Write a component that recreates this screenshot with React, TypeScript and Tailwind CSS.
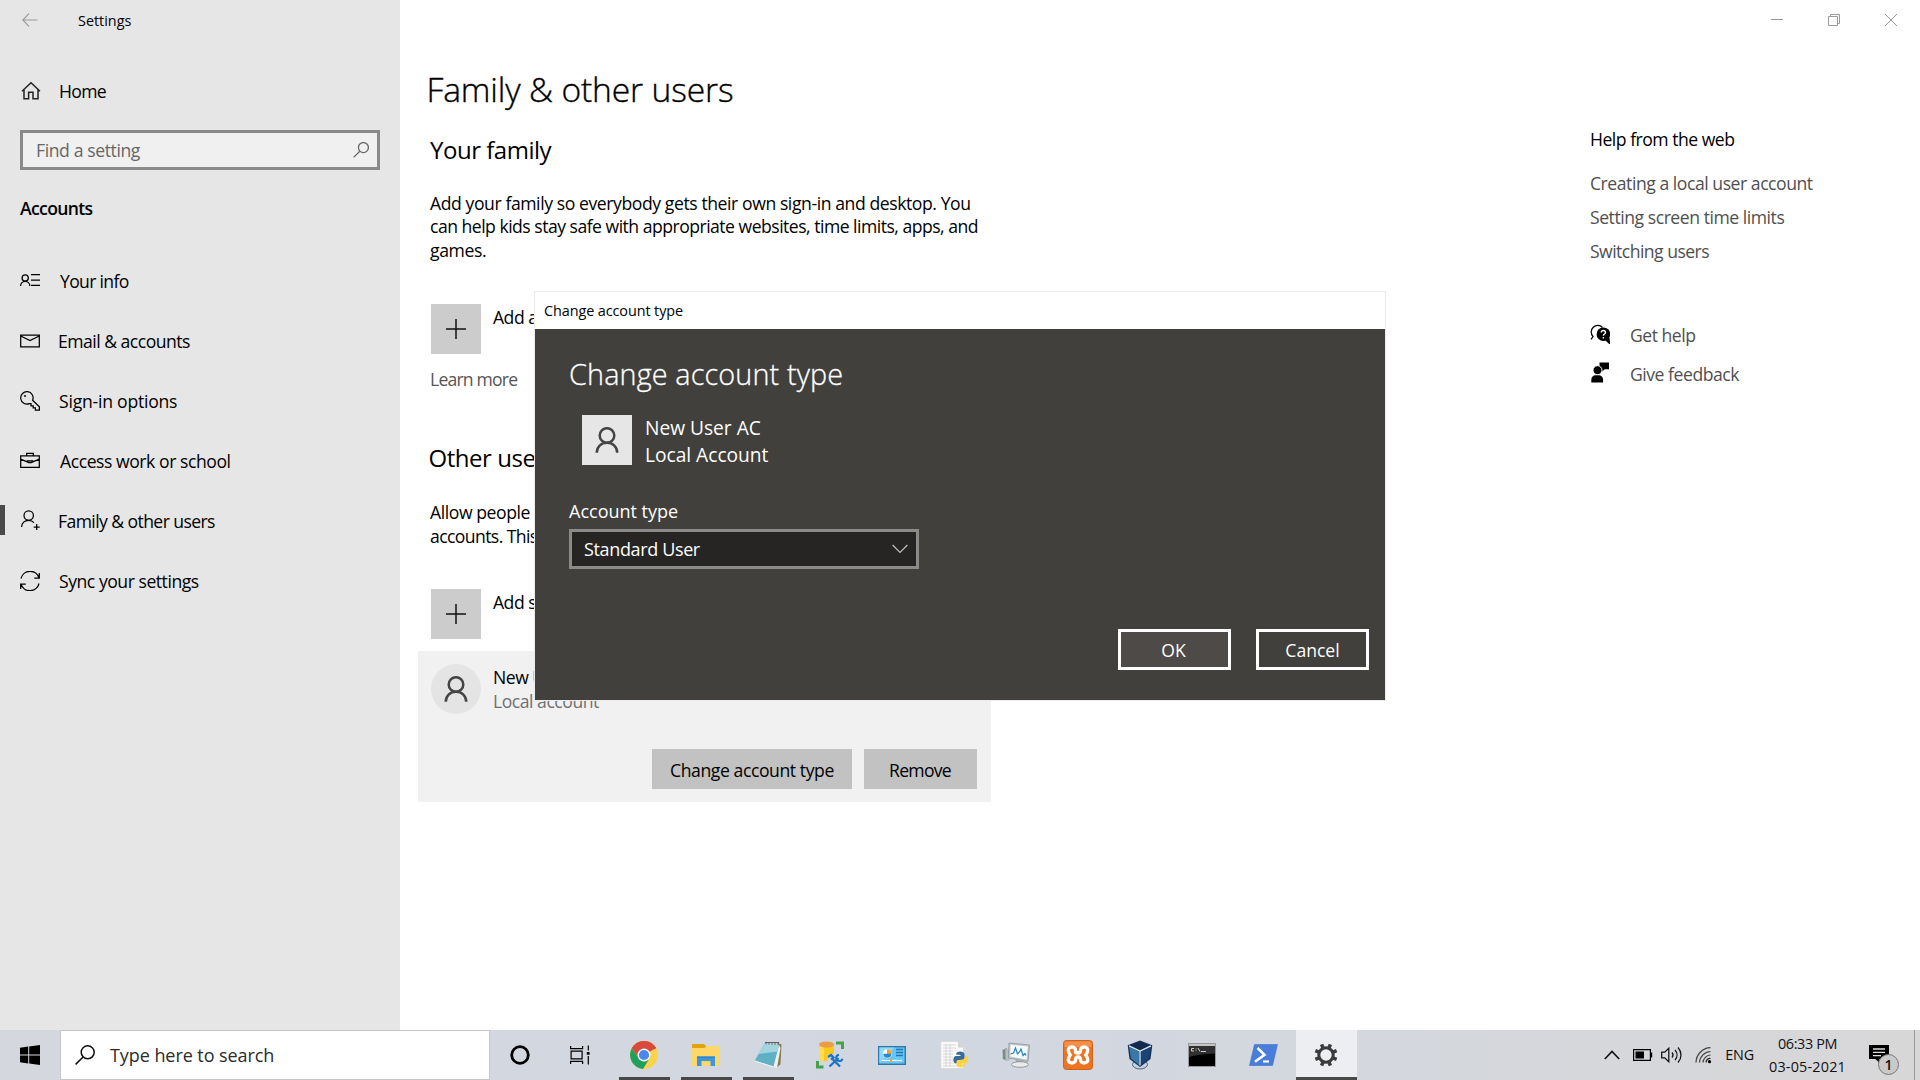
import React from "react";
import type { ReactNode } from "react";

const BODY = "text-[17.6px] leading-[24px]";

function Icon({ w = 20, h = 20, children, className = "" }: { w?: number; h?: number; children: ReactNode; className?: string }) {
  return (
    <svg width={w} height={h} viewBox={`0 0 ${w} ${h}`} fill="none" stroke="currentColor" strokeWidth={1.25} className={`shrink-0 ${className}`}>
      {children}
    </svg>
  );
}

const navItems: { label: string; text: string; icon: ReactNode; active?: boolean }[] = [
  {
    label: "Your info",
    text: "tracking-[-0.68px] ml-[20px]",
    icon: (
      <Icon className="-mt-[2px]">
        <circle cx="5.2" cy="8" r="3.1" />
        <path d="M.6 16c0-2.700 2-4.700 4.600-4.700S9.800 13.300 9.800 16M11 4.600h9M11 10h9M11 15.400h9" />
      </Icon>
    ),
  },
  {
    label: "Email & accounts",
    text: "tracking-[-0.51px] ml-[18px]",
    icon: (
      <Icon>
        <path d="M.7 4.200h18.600v11.600H.7zM.7 5l9.300 4.600L19.300 5" />
      </Icon>
    ),
  },
  {
    label: "Sign-in options",
    text: "tracking-[-0.23px] ml-[19px]",
    icon: (
      <Icon>
        <path d="M12.600 9.300a6.200 6.200 0 1 0-3.300 3.300l1.700 0v2.200h2.200v2h2.200v2.400h4v-3.300z" />
        <circle cx="5" cy="5" r=".8" fill="currentColor" strokeWidth=".5" />
      </Icon>
    ),
  },
  {
    label: "Access work or school",
    text: "tracking-[-0.45px] ml-[20px]",
    icon: (
      <Icon className="-mt-[1px]">
        <path d="M.7 4.800h18.600v11.600H.7zM6.700 4.600V2.400h6.600v2.200M.7 8.200l6.500 2.600M19.300 8.200l-6.500 2.600" />
        <path d="M7.200 9.900h5.600c0 2.300-5.600 2.300-5.600 0z" />
      </Icon>
    ),
  },
  {
    label: "Family & other users",
    text: "tracking-[-0.59px] ml-[18px]",
    active: true,
    icon: (
      <Icon className="-mt-[2px]">
        <circle cx="8.700" cy="5.600" r="4.700" />
        <path d="M1.600 17c0-4 3-6.700 7-6.700 2.200 0 4.100.9 5.400 2.400M16.700 14v6M13.700 17h6" />
      </Icon>
    ),
  },
  {
    label: "Sync your settings",
    text: "tracking-[-0.47px] ml-[19px]",
    icon: (
      <Icon>
        <path d="M1 7.500A9.300 9.300 0 0 1 19 7M19.300 2v5h-5M19 12.500A9.300 9.300 0 0 1 1 13M.7 18v-5h5" />
      </Icon>
    ),
  },
];

function Sidebar() {
  return (
    <aside className="flex w-[400px] shrink-0 flex-col bg-[#e6e6e6]">
      <div className="flex h-10 items-center pl-[22px]">
        <Icon w={16} h={14} className="text-[#999]">
          <path d="M15.500 7H.8M7 .7.8 7 7 13.300" strokeWidth="1.100" />
        </Icon>
        <span className="ml-[40px] mt-[2px] text-[14.4px] leading-5">Settings</span>
      </div>
      <div className="mt-[21px] flex h-[60px] items-center pl-[21px]">
        <Icon className="text-[#222]">
          <path d="M1 10.200 10 1.700l9 8.500M3 8.500v9.300h4.600v-6.500h4.400v6.500h5V8.500" strokeWidth="1.500" />
        </Icon>
        <span className={`${BODY} ml-[18px] tracking-[-0.7px]`}>Home</span>
      </div>
      <div className="mx-5 mt-[9px] flex h-10 items-center justify-between border-[3px] border-[#8a8a8a] bg-[#f0f0f0] pl-[13px] pr-[8px]">
        <span className={`${BODY} tracking-[-0.4px] text-[#666]`}>Find a setting</span>
        <Icon w={16} h={16} className="text-[#666]">
          <circle cx="10.400" cy="5.600" r="5" />
          <path d="M6.800 9.200.6 15.400" />
        </Icon>
      </div>
      <h2 className={`${BODY} ml-[20px] mt-[26px] font-semibold tracking-[-0.65px]`}>Accounts</h2>
      <nav className="mt-[31px] flex flex-col">
        {navItems.map((n) => (
          <div key={n.label} className="flex h-[60px] items-center">
            <span className={`-mt-[2px] h-[30px] w-[5px] ${n.active ? "bg-[#4c4a48]" : ""}`} />
            <span className="ml-[15px] flex items-center">
              {n.icon}
              <span className={`${BODY} whitespace-nowrap ${n.text}`}>{n.label}</span>
            </span>
          </div>
        ))}
      </nav>
    </aside>
  );
}

function PlusTile() {
  return (
    <span className="flex size-[50px] shrink-0 items-center justify-center bg-[#ccc] text-[#111]">
      <Icon>
        <path d="M10 0v20M0 10h20" strokeWidth="1.500" />
      </Icon>
    </span>
  );
}

function Person() {
  return (
    <Icon w={24} h={26} className="text-[#444]">
      <circle cx="12" cy="8.500" r="7.300" strokeWidth="2.500" />
      <path d="M1.800 25.800c0-6 4.200-10 10.200-10s10.200 4 10.200 10" strokeWidth="2.500" />
    </Icon>
  );
}

function Content() {
  return (
    <div className="flex w-[591px] flex-col pl-[30px] pt-[67px]">
      <h1 className="-ml-[3.500px] whitespace-nowrap text-[33.6px] font-light leading-[44px] tracking-[-0.15px] [-webkit-text-stroke:0.35px_black]">Family &amp; other users</h1>
      <h2 className="mt-[23px] text-[24px] leading-8 tracking-[-0.48px]">Your family</h2>
      <p className="mt-[25.5px] whitespace-nowrap text-[17.6px] leading-[23.5px]">
        <span className="block tracking-[-0.42px]">Add your family so everybody gets their own sign-in and desktop. You</span>
        <span className="block tracking-[-0.51px]">can help kids stay safe with appropriate websites, time limits, apps, and</span>
        <span className="block tracking-[-0.4px]">games.</span>
      </p>
      <div className="ml-[1px] mt-[42px] flex">
        <PlusTile />
        <span className={`${BODY} ml-[12px] mt-[1px] tracking-[-0.5px]`}>Add a</span>
      </div>
      <span className={`${BODY} mt-[13px] tracking-[-0.8px] text-[#555]`}>Learn more</span>
      <h2 className="-ml-[1.500px] mt-[51px] text-[24px] leading-8 tracking-[-0.45px]">Other use</h2>
      <p className="mt-[25.5px] whitespace-nowrap text-[17.6px] leading-[24px] tracking-[-0.42px]">
        <span className="block">Allow people</span>
        <span className="block tracking-[-0.6px]">accounts. This</span>
      </p>
      <div className="ml-[1px] mt-[41.5px] flex">
        <PlusTile />
        <span className={`${BODY} ml-[12px] mt-[1px] tracking-[-0.5px]`}>Add s</span>
      </div>
      <div className="-ml-3 mt-3 flex h-[151px] flex-col justify-between bg-[#f1f1f1] pb-[13px] pl-[13px] pr-[14px] pt-[13px]">
        <div className="flex">
          <span className="flex size-[50px] items-center justify-center rounded-full bg-[#e4e4e4]">
            <Person />
          </span>
          <span className="ml-[12px] mt-[1px] flex flex-col">
            <span className={`${BODY} tracking-[-0.5px]`}>New U</span>
            <span className={`${BODY} tracking-[-0.48px] text-[#707070]`}>Local account</span>
          </span>
        </div>
        <div className="flex justify-end gap-3">
          <button className={`${BODY} h-10 w-[200px] bg-[#c2c2c2] pt-[2px] tracking-[-0.42px]`}>Change account type</button>
          <button className={`${BODY} h-10 w-[113px] bg-[#c2c2c2] pr-[1px] pt-[2px] tracking-[-0.72px]`}>Remove</button>
        </div>
      </div>
    </div>
  );
}

function HelpColumn() {
  return (
    <div className={`${BODY} ml-[599px] flex w-[330px] flex-col`}>
      <div className="flex h-10 items-center justify-end pr-[23px] text-[#999]">
        <Icon w={12} h={12}><path d="M0 5.500h12" strokeWidth="1" /></Icon>
        <Icon w={12} h={12} className="ml-[45px]"><path d="M.5 2.500h9v9h-9zM2.500 2.500v-2h9v9h-2" strokeWidth="1" /></Icon>
        <Icon w={12} h={12} className="ml-[45px]"><path d="m0 0 12 12M12 0 0 12" strokeWidth="1" /></Icon>
      </div>
      <span className="mt-[87px] tracking-[-0.5px]">Help from the web</span>
      <div className="mt-[20px] flex flex-col gap-[10px] text-[#4f4f4f]">
        <span className="tracking-[-0.46px]">Creating a local user account</span>
        <span className="tracking-[-0.46px]">Setting screen time limits</span>
        <span className="tracking-[-0.54px]">Switching users</span>
      </div>
      <div className="mt-[60px] flex items-center">
        <Icon className="-mt-[3px] text-black">
          <path d="M1 15.400 3 12.500A6.300 6.300 0 1 1 12.500 3.500" />
          <circle cx="13.400" cy="10.200" r="6.200" fill="black" />
          <path d="m15 15 4.500 4.500-.5-5z" fill="black" />
          <path d="M11.300 8.600c0-2.800 4.200-2.600 4.200-.2 0 1.600-2.100 1.500-2.100 3.300M13.400 13v1.400" stroke="white" strokeWidth="1.400" />
        </Icon>
        <span className="ml-[20px] tracking-[-0.49px] text-[#4f4f4f]">Get help</span>
      </div>
      <div className="mt-[15px] flex items-center">
        <Icon className="-mt-[3px] text-black" h={21}>
          <path d="M9.500.5H19v6.700h-4.200l-3 2.600V7.200H9.500z" fill="black" stroke="none" />
          <circle cx="7.500" cy="8.200" r="4.500" fill="black" stroke="white" strokeWidth="1" />
          <path d="M1.300 20.500v-2.600c0-2.400 1.500-4.600 3.600-4.600h4.500c2.100 0 3.700 2.200 3.700 4.600v2.600z" fill="black" stroke="none" />
        </Icon>
        <span className="ml-[20px] tracking-[-0.47px] text-[#4f4f4f]">Give feedback</span>
      </div>
    </div>
  );
}

function Dialog() {
  return (
    <div className="absolute left-[534px] top-[291px] flex h-[410px] w-[852px] flex-col border border-[#ebebeb] bg-[#41403c] text-white">
      <div className="flex h-[37px] items-center bg-white pl-[9px] text-[14.4px] leading-5 tracking-[-0.08px] text-black">Change account type</div>
      <h2 className="ml-[34px] mt-[25px] text-[28.8px] font-light leading-10 tracking-[0.13px] [-webkit-text-stroke:0.3px_white]">Change account type</h2>
      <div className="ml-[47px] mt-[21px] flex">
        <span className="flex size-[50px] items-center justify-center bg-[#e6e6e6]">
          <Person />
        </span>
        <div className="ml-[13px] flex flex-col text-[19.2px] leading-[26.5px] tracking-[-0.02px]">
          <span>New User AC</span>
          <span>Local Account</span>
        </div>
      </div>
      <span className="ml-[34px] mt-[31px] text-[18px] leading-6">Account type</span>
      <div className="ml-[34px] mt-[6px] flex h-10 w-[350px] items-center justify-between border-[3px] border-[#8b8a88] bg-[#262523] pl-[12px] pr-[8px]">
        <span className="-mt-[1px] text-[18px] leading-[22px] tracking-[-0.36px]">Standard User</span>
        <Icon w={16} h={10} className="text-[#bbb]">
          <path d="m.6 1 7.400 7.400L15.400 1" />
        </Icon>
      </div>
      <div className="mr-4 mt-[60px] flex justify-end gap-[25px] text-[17.600px] leading-6">
        <button className="h-[41px] w-[113px] border-[3px] border-white bg-[#4e4a47] pr-[2px]">OK</button>
        <button className="h-[41px] w-[113px] border-[3px] border-white">Cancel</button>
      </div>
    </div>
  );
}

const ChromeIcon = (
  <svg width="28" height="28" viewBox="0 0 28 28">
    <circle cx="14" cy="14" r="14" fill="#fdd34d" />
    <path d="M14 14 1.880 7A14 14 0 0 1 26.120 7z" fill="#da4a3c" />
    <path d="M14 7.600h12.450A14 14 0 0 0 1.880 7l6.580 10.200z" fill="#da4a3c" />
    <path d="M1.880 7A14 14 0 0 0 13 27.950L19.540 17.200 14 20.400 8.460 17.200z" fill="#1fa15d" />
    <circle cx="14" cy="14" r="6.500" fill="#fff" />
    <circle cx="14" cy="14" r="5.100" fill="#4a88f0" />
  </svg>
);

const ExplorerIcon = (
  <svg width="28" height="24" viewBox="0 0 28 24">
    <path d="M0 1h12l2 2v4H0z" fill="#e3a10c" />
    <path d="M0 5h12.500l2-2H28v20H0z" fill="#ffd768" />
    <path d="M5 23V13.500h18V23h-4.500v-5h-9v5z" fill="#3e97dd" />
    <path d="M5 13.500h18v1.500H5z" fill="#2f86cf" />
  </svg>
);

const NotepadIcon = (
  <svg width="28" height="28" viewBox="0 0 28 28">
    <path d="m24 2 3.500 1.500-1 20-4 3z" fill="#8a7a55" />
    <path d="m24.500 3-6 22.500 4.500 1.500 3.500-20z" fill="#eef1f2" />
    <path d="M10.500 2.500 25 4l-5.500 21.500L.8 19.500z" fill="#5fb0c4" />
    <path d="M10.500 2.500 25 4l-1.800 6.500L4.500 13z" fill="#a3d5df" />
    <path d="M.8 19.500 19.500 25.500l-.4 1L.5 20.500z" fill="#e8f3f5" />
    <path d="M11 1.500h14M12 .8v2.500M15 1v2.500M18 1v2.500M21 1.200v2.500M24 1.400v2.500" stroke="#555" strokeWidth=".9" />
  </svg>
);

const DatabaseIcon = (
  <svg width="28" height="28" viewBox="0 0 28 28">
    <path d="M3 3.500v14c0 3.500 15 3.500 15 0v-14z" fill="#fcc91e" />
    <path d="M3 3.500v14c0 1.300 2 2.100 5 2.500V4z" fill="#ffdc54" />
    <ellipse cx="10.500" cy="3.600" rx="7.500" ry="3.200" fill="#eb9d45" />
    <path d="M20 2h6.500v6M1.500 20v6h6" fill="none" stroke="#46a148" strokeWidth="3" />
    <path d="M11.500 13.500h9v5l-7 7h-2z" fill="#d2d7e0" />
    <path d="m13.500 25.500 9-8.500M12 16l3-2 2.500 2.500-2.500 2M16 17.500l8 8" fill="none" stroke="#1a73c8" strokeWidth="2.300" />
    <path d="M23 13.700a3.200 3.200 0 1 0 3.500 4" fill="none" stroke="#1a73c8" strokeWidth="2" />
  </svg>
);

const ControlPanelIcon = (
  <svg width="28" height="19" viewBox="0 0 28 19">
    <rect x=".7" y=".7" width="26.600" height="17.600" fill="#68c5f5" stroke="#2b78a8" strokeWidth="1.400" />
    <path d="M1.400 17.600V1.400h15z" fill="#90d8fb" />
    <circle cx="9.300" cy="7.800" r="4.600" fill="#fff" />
    <path d="M9.300 7.800h-4a4 4 0 1 0 4-4z" fill="#2987cf" />
    <path d="M9.300 7.800V3.200a4.600 4.600 0 0 1 4.600 4.600z" fill="#f7a325" />
    <path d="M18 3.500h7M18 6.500h7M18 9.500h7" stroke="#1e75b8" strokeWidth="1.700" />
    <path d="M4 14.500h20" stroke="#fff" strokeWidth="1.200" />
    <path d="M13 13v3" stroke="#f7a325" strokeWidth="2" />
  </svg>
);

const PythonFileIcon = (
  <svg width="28" height="28" viewBox="0 0 28 28">
    <path d="M.8.5H18l5.500 6v21H.8z" fill="#fafafa" stroke="#d4d4d4" strokeWidth=".7" />
    <path d="M3 4h13M3 7h13M3 10h10M3 13h10M3 16h10M3 19h11M3 22h11M3 25h15M6 3v23M10 3v23" stroke="#cfcfcf" strokeWidth=".8" />
    <path d="M18 .5v6h5.500z" fill="#d2d2d2" />
    <path d="M16 13.500c0-4 8.500-4 8.500 0v4c0 2-5 1-6.500 2.500-1 1-.5 2.500-2 2.500-3.500 0-3.500-7.500 0-7.500h4.500v-1z" fill="#366b9b" />
    <path d="M25.500 14.500c3.500 0 3.500 8 0 8H21v1h4c0 4-8.500 4-8.500 0v-3c0-2.500 5.500-1 7.500-2.500 1.200-.9.600-3.500 1.500-3.500z" fill="#ffd23f" />
  </svg>
);

const MonitorIcon = (
  <svg width="28" height="26" viewBox="0 0 28 26">
    <path d="m.5 8 4.500-2v13l-4-2z" fill="#7f888c" />
    <path d="M3.500 7h4v12h-4z" fill="#b9c0c2" />
    <path d="m1.500 15 .1 2" stroke="#4caf50" strokeWidth="1.500" />
    <path d="m7 1 20.500 2L26 19.500 6.500 16z" fill="#c3c8ca" stroke="#8d9396" strokeWidth=".8" />
    <path d="m8.500 2.800 17.300 1.700L24.500 17.500 8.200 14.500z" fill="#f3fafd" />
    <path d="m8.500 12 3-1 2-5 2 6 2-2 1.500-3 2 6.500 2-2 1 2" fill="none" stroke="#2884b9" strokeWidth="1.200" />
    <path d="m14 18 6 .5.500 2.500-7-.5z" fill="#a5abae" />
    <ellipse cx="18" cy="22.500" rx="8.500" ry="2.800" fill="#e8eaeb" stroke="#888" strokeWidth=".8" />
  </svg>
);

const XamppIcon = (
  <svg width="30" height="30" viewBox="0 0 30 30">
    <rect x=".5" y=".5" width="29" height="29" rx="3" fill="#ef7422" stroke="#d0621a" />
    <path d="M1.500 3a2 2 0 0 1 2-1.500h23a2 2 0 0 1 2 1.500v4h-27z" fill="#f59b58" opacity=".7" />
    <path
      d="M12.500 12.500V10c0-4-7.200-4-7.200 0 0 2.200.8 3.500 2 5-1.200 1.500-2 2.800-2 5 0 4 7.200 4 7.200 0 0-2.200 1-3 2.500-3s2.500.8 2.500 3c0 4 7.200 4 7.200 0 0-2.200-.8-3.500-2-5 1.200-1.500 2-2.800 2-5 0-4-7.200-4-7.200 0 0 2.200-1 3-2.500 3s-2.500-.8-2.500-3"
      fill="none"
      stroke="#fff"
      strokeWidth="3.400"
      strokeLinecap="round"
    />
  </svg>
);

const VirtualBoxIcon = (
  <svg width="26" height="30" viewBox="0 0 26 30">
    <ellipse cx="13" cy="24.500" rx="7.500" ry="4.500" fill="#c8d0dd" stroke="#4f6288" />
    <path d="m13 .6 12.300 4.600L23.500 19 13 27 2.500 19 .7 5.200z" fill="#14305a" />
    <path d="M2 6.500 12 11.500V25L4 18.500z" fill="#3a78a8" />
    <path d="M24 6.500 14 11.500V25l8-6.500z" fill="#1b4472" />
    <path d="m13 2.300 9.500 3.500L13 10.500 3.500 5.800z" fill="#112a4c" />
    <path d="M2 5.900 13 11l11-5.100M13 11v14.500" fill="none" stroke="#dfe9f2" strokeWidth="1.300" />
  </svg>
);

const TerminalIcon = (
  <svg width="28" height="24" viewBox="0 0 28 24">
    <rect x=".5" y=".5" width="27" height="23" fill="#000" stroke="#9a9a9a" />
    <path d="M1 1h26v2H1z" fill="#c4c4c4" />
    <path d="M1 3h26v7.500C16 11 7 12 1 14z" fill="#303030" />
    <path d="M6 5.500H3.500v2.500H6M8 5.500v.8M8 7.500v.7M10 5l2 3.500M13 8.500h5" fill="none" stroke="#ddd" strokeWidth=".9" />
  </svg>
);

const PowerShellIcon = (
  <svg width="29" height="22" viewBox="0 0 29 22">
    <path d="M5.500.5h23l-5 21H.5z" fill="#477ddb" stroke="#3465bd" strokeWidth=".5" />
    <path d="m8.500 4 7 6.800-9.500 7" fill="none" stroke="#fff" strokeWidth="2.600" />
    <path d="M14 17.500h6" stroke="#fff" strokeWidth="2.200" />
  </svg>
);

const GearIcon = (
  <svg width="24" height="24" viewBox="0 0 24 24" fill="none" stroke="#3b3b3b">
    <circle cx="12" cy="12" r="7.200" strokeWidth="3" />
    {[22.5, 67.5, 112.5, 157.5, 202.5, 247.5, 292.5, 337.5].map((a) => (
      <path key={a} d="M12 4.500V.5" strokeWidth="3.600" transform={`rotate(${a} 12 12)`} />
    ))}
  </svg>
);

const apps: { name: string; icon: ReactNode; running?: boolean; active?: boolean }[] = [
  { name: "chrome", icon: ChromeIcon, running: true },
  { name: "explorer", icon: ExplorerIcon, running: true },
  { name: "notepad", icon: NotepadIcon, running: true },
  { name: "database", icon: DatabaseIcon },
  { name: "control-panel", icon: ControlPanelIcon },
  { name: "python", icon: PythonFileIcon },
  { name: "monitor", icon: MonitorIcon },
  { name: "xampp", icon: XamppIcon },
  { name: "virtualbox", icon: VirtualBoxIcon },
  { name: "terminal", icon: TerminalIcon },
  { name: "powershell", icon: PowerShellIcon },
  { name: "settings", icon: GearIcon, active: true },
];

function Taskbar() {
  return (
    <div className="flex h-[50px] items-stretch bg-linear-to-r from-[#d5d7de] via-[#d1d7e1] to-[#d8d7d8]">
      <div className="flex w-[60px] items-center justify-center">
        <svg width="20" height="20" viewBox="0 0 20 20" fill="black">
          <path d="M0 2.800 8.200 1.600v7.900H0zM9.200 1.500 20 0v9.500H9.200zM0 10.500h8.200v7.900L0 17.200zM9.200 10.500H20V20L9.200 18.500z" />
        </svg>
      </div>
      <div className="flex w-[430px] items-center border border-[#c6c6c8] bg-white pl-[14px]">
        <Icon className="text-[#111]">
          <circle cx="12.700" cy="7.300" r="6.500" strokeWidth="1.500" />
          <path d="M8.100 12 .6 19.400" strokeWidth="1.500" />
        </Icon>
        <span className="-mt-[1px] ml-[15px] text-[18px] leading-6 tracking-[-0.07px] text-[#2b2b2b]">Type here to search</span>
      </div>
      <div className="flex w-[60px] items-center justify-center">
        <svg width="20" height="20" viewBox="0 0 20 20" fill="none" stroke="black">
          <circle cx="10" cy="10" r="8.300" strokeWidth="2.800" />
        </svg>
      </div>
      <div className="flex w-[64px] items-center justify-center pr-[4px]">
        <svg width="20" height="20" viewBox="0 0 20 20" fill="none" stroke="black" strokeWidth="1.200">
          <path d="M.6 1v2.700h12V1M.6 19v-2.700h12V19M1.100 6.200h11v7.600h-11zM18.300.5v5M18.300 11v8.500" />
          <path d="M16.800 7h2.800v2.700h-2.800z" fill="black" stroke="none" />
        </svg>
      </div>
      {apps.map((a) => (
        <div key={a.name} className={`flex flex-col items-center ${a.active ? "w-[61px] bg-[#edeef2]" : "w-[62px]"}`}>
          <div className={`flex h-[47px] items-center pt-[3px] ${a.active ? "pr-[2px]" : "pr-[3px]"}`}>{a.icon}</div>
          <div className={`h-[3px] ${a.running ? "mr-[1px] w-[51px] bg-[#484848]" : a.active ? "w-full bg-[#484848]" : ""}`} />
        </div>
      ))}
      <div className="ml-auto flex items-center text-[14.4px] leading-[22.5px] text-[#111]">
        <Icon w={16} h={10}>
          <path d="m.8 9 7.200-7.500L15.200 9" strokeWidth="1.600" />
        </Icon>
        <Icon w={20} h={12} className="ml-[13px] text-black">
          <path d="M.6.600h16.800v10.800H.6zM18.600 3.500v5" strokeWidth="1.200" />
          <path d="M2.500 2.500h8.500v7H2.500z" fill="black" stroke="none" />
        </Icon>
        <Icon w={22} h={18} className="ml-[8px]">
          <path d="M.7 6.200h3l4.100-4v13.600l-4.100-4h-3zM11 6.500c1.300 1.500 1.300 3.500 0 5M14 4c2.700 3 2.700 7 0 10M17 1.500c4 4.500 4 10.500 0 15" />
        </Icon>
        <Icon w={17} h={18} className="ml-[12px]">
          <path d="M1 16.500A15 15 0 0 1 15.500 1.700M4.500 16.500A11.500 11.500 0 0 1 15.500 5.500M8 16.500a8 8 0 0 1 7.500-7.500" stroke="#444" />
          <path d="M11 16.500a4 4 0 0 1 4.500-4" stroke="#222" />
          <circle cx="14.500" cy="15.700" r="1.600" fill="black" stroke="none" />
        </Icon>
        <span className="ml-[13px] mt-[1px] tracking-[-0.16px]">ENG</span>
        <div className="ml-[15px] mr-[1px] mt-[1px] flex w-[77px] flex-col items-center whitespace-nowrap">
          <span className="tracking-[-0.37px]">06:33 PM</span>
          <span className="tracking-[0.2px]">03-05-2021</span>
        </div>
        <div className="relative ml-[22px] h-[50px] w-[45px]">
          <svg width="20" height="18" viewBox="0 0 20 18" className="absolute left-0 top-[15px]">
            <path d="M0 0h20v14h-9.500v4l-4-4H0z" fill="black" />
            <path d="M4 4h12M4 7.300h12M4 10.600h8" stroke="#ddd" strokeWidth="1.300" />
          </svg>
          <span className="absolute left-[9px] top-[24px] flex size-[21px] items-center justify-center rounded-full border border-[#777] bg-[#c9c9ca] text-[14px] font-semibold leading-none">1</span>
        </div>
        <span className="h-full w-px bg-[#9b9b9b]" />
        <span className="w-[5px]" />
      </div>
    </div>
  );
}

export default function App() {
  return (
    <div className="relative flex h-[1080px] w-[1920px] flex-col overflow-hidden bg-white font-['Open_Sans','Noto_Sans',sans-serif] text-black">
      <div className="flex h-[1030px]">
        <Sidebar />
        <Content />
        <HelpColumn />
      </div>
      <Taskbar />
      <Dialog />
    </div>
  );
}
